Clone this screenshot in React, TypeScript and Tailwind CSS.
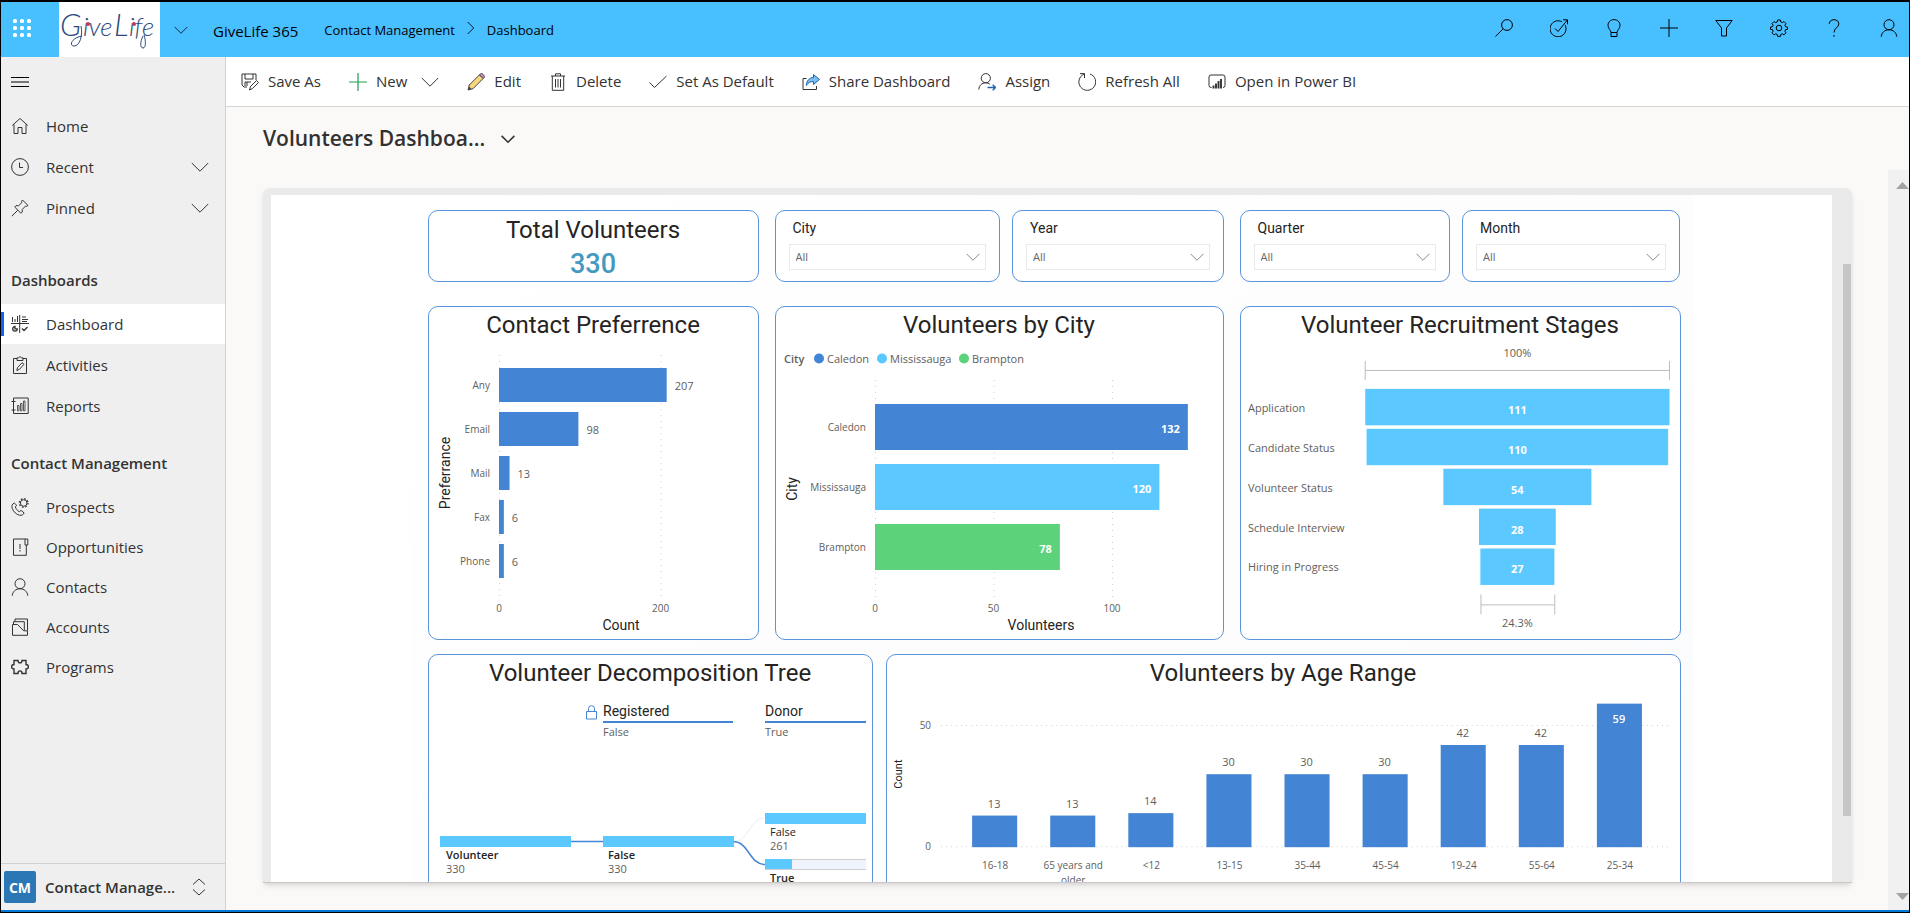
import type { ReactNode } from 'react';

const BLUE = '#4484d4';
const SKY = '#5bc9ff';
const GREEN = '#5cd27a';

// Line icon drawn on an 18x18 grid
function Icon({ children, size = 18, className = '' }: { children: ReactNode; size?: number; className?: string }) {
  return (
    <svg
      width={size}
      height={size}
      viewBox="0 0 18 18"
      fill="none"
      stroke="currentColor"
      strokeWidth="1"
      aria-hidden="true"
      className={`shrink-0 ${className}`}
    >
      {children}
    </svg>
  );
}

const ChevronDown = ({ size = 18, className = '' }: { size?: number; className?: string }) => (
  <Icon size={size} className={className}>
    <path d="M.8 5l8.2 8.2L17.200 5" />
  </Icon>
);

const gearPath =
  'M7.600 1h2.800l.4 2 1.500.6 1.700-1.100 2 2-1.100 1.700.6 1.500 2 .4v2.200l-2 .4-.6 1.500 1.100 1.700-2 2-1.700-1.100-1.500.6-.4 2H7.600l-.4-2-1.500-.6L4 15.900l-2-2 1.100-1.700-.6-1.500-2-.4V8.100l2-.4.6-1.500L2 4.500l2-2 1.700 1.100 1.500-.6z';

const person = (
  <>
    <circle cx="9" cy="5.700" r="5" />
    <path d="M1.200 17.800c.4-4.400 3.600-7 7.800-7s7.400 2.600 7.800 7" />
  </>
);

const topActions = [
  { label: 'Search', icon: <><circle cx="12" cy="6" r="5.400" /><path d="M8 10L.4 17.500" /></> },
  { label: 'Task flow', icon: <><path d="M15 5.800a8 8 0 1 1-3-3" /><path d="M5 9.500l3 3L17.300 1M13 .8h4.500v4.500" /></> },
  { label: 'Insights', icon: <><path d="M6 13.500c0-2.500-3-3.500-3-7.200C3 3 5.600.6 9 .6s6 2.400 6 5.700c0 3.700-3 4.700-3 7.200zM6 13.500v4h6v-4" /></> },
  { label: 'Quick create', icon: <path d="M9 0v18M0 9h18" /> },
  { label: 'Filter', icon: <path d="M.8 1.500h16.400L11.500 9v8h-5V9z" /> },
  { label: 'Settings', icon: <><path d={gearPath} /><circle cx="9" cy="9" r="2.800" /></> },
  { label: 'Help', icon: <path d="M4.200 4.800C4.400 2.200 6.300.7 9 .7s4.800 1.500 4.800 4.200c0 3.600-4.800 4.200-4.800 8.600M9 16v1.800" /> },
  { label: 'Account', icon: person },
];

const commands = [
  {
    label: 'Save As',
    icon: <><path d="M6 14H3L1 12V1h14v6M4 1v5h8V1M4 13V9h6M6 9v4" /><path d="M8.500 17l1-3.500 6-6 2 2-6 6z" /></>,
  },
  { label: 'New', icon: <path d="M9 0v18M0 9h18" stroke="#1fa050" strokeWidth="1.200" />, menu: true },
  {
    label: 'Edit',
    icon: (
      <>
        <path d="M1 17l1.300-5L12.500 1.800l3.700 3.700L6 15.700z" fill="#f8d77e" stroke="#444" />
        <path d="M12.500 1.800l1-1c1.600-1 4.600 2 3.700 3.700l-1 1z" fill="#cf8fd6" stroke="#444" />
        <path d="M1 17l1-3.500L4.500 16z" fill="#444" stroke="none" />
      </>
    ),
  },
  {
    label: 'Delete',
    icon: <><path d="M2 3h14M6.500 3V.8h5V3M3.300 3v14.300h11.400V3" /><path d="M6.500 6v8.500M9 6v8.500M11.500 6v8.500" /></>,
  },
  { label: 'Set As Default', icon: <path d="M.5 9.500l5 5L17.500 3" /> },
  {
    label: 'Share Dashboard',
    icon: (
      <>
        <path d="M4.500 5.500H1v11h13.500V13" />
        <path d="M11.500 1.500l6 5-6 5V8.600C8 8.500 6 9.600 4.300 12.500 4.600 7.500 7.300 4.700 11.500 4.500z" fill="#7dbcf0" stroke="#1d64ae" />
      </>
    ),
  },
  {
    label: 'Assign',
    icon: (
      <>
        <circle cx="7.800" cy="5.200" r="4.600" />
        <path d="M.8 16.500c.4-4 3-6.700 7-6.700 1.700 0 3 .5 4 1.300" />
        <path d="M9.500 14.500h8M14.700 11.700l2.800 2.800-2.800 2.800" stroke="#1d64ae" strokeWidth="1.400" />
      </>
    ),
  },
  { label: 'Refresh All', icon: <><path d="M6 1.200A8.400 8.400 0 1 0 12 1" /><path d="M2 .6h4.500v4.500" /></> },
  {
    label: 'Open in Power BI',
    icon: (
      <>
        <path d="M3.500 14.500H3a2 2 0 0 1-2-2V4a2 2 0 0 1 2-2h12a2 2 0 0 1 2 2v8.500a2 2 0 0 1-2 2" />
        <path d="M5.500 15.500v-3M8 15.500v-5M10.500 15.500V8M13 15.500V6" strokeWidth="1.900" />
      </>
    ),
  },
];

const homeLinks = [
  { label: 'Home', icon: <path d="M1.200 8.500L9 1.500l7.800 7M3 7.500v9h4v-6h4v6h4v-9" /> },
  { label: 'Recent', icon: <><circle cx="9" cy="9" r="8.400" /><path d="M8.500 4.500v5H12" /></>, expandable: true },
  { label: 'Pinned', icon: <path d="M11.500 1l5.500 5.500-1.500.8-1-.2-3.300 3.400.2 2.500-1.400 1.300-6.300-6.300L5 6.600l2.500.2 3.400-3.300-.3-1.200zM6.800 11.200L.8 17.200" />, expandable: true },
];

const dashboardLinks = [
  {
    label: 'Dashboard',
    icon: (
      <>
        <path d="M0 8.500h18M8.700 0v18" />
        <path d="M1.500 2v5M4 4v3M6.500 1v6M11 2h4M11 4.500h6M11 6.500h5" />
        <path d="M4 11.500a2.300 2.300 0 1 0 2.300 2.300H4zM11 13.500l2 2 3.500-3.500" strokeWidth="1.300" />
      </>
    ),
    active: true,
  },
  { label: 'Activities', icon: <><path d="M6 2.500H2.500v15h13v-15H12M6 4.500h6v-2.700h-1.500L9 .6 7.500 1.800H6z" /><path d="M5.800 14.500l.7-2.800 4.500-5 2 1.600-4.500 5z" /></> },
  { label: 'Reports', icon: <><path d="M2.500 1h14.700v15.500H2.500zM.5 4.500h4M.5 13h4" /><path d="M6.500 8.500H8v5.300H6.500zM9.500 6.500H11v7.300H9.500zM12.500 4H14v9.800h-1.500z" strokeWidth=".8" /></> },
];

const contactLinks = [
  {
    label: 'Prospects',
    icon: (
      <>
        <path d="M3.300 5C1 6 .3 8 1.300 10.500c1.500 3.700 4 6 7.200 6.700 2.200.4 4-.5 4.600-2.300l-3-2.500-1.800 1.300c-2-1-3.500-3-4-5l1.500-1.300z" />
        <circle cx="12.700" cy="5" r="3.300" />
        <circle cx="12.700" cy="5" r="4.300" strokeDasharray="1.600 1.780" strokeWidth="1.300" />
      </>
    ),
  },
  { label: 'Opportunities', icon: <><path d="M14 1H2.500v16.300h12.800V7" /><path d="M14 1h2.800v6H14zM9 6v5M9 12v1.500" /></> },
  { label: 'Contacts', icon: person },
  { label: 'Accounts', icon: <><path d="M1.500 6.500v10.800h15v-4.500h-3.800L6.500 6.500zM2.500 6.500V3.700h10.800v8.500" /><path d="M4 3.500V1h12.500v11.500" /></> },
  {
    label: 'Programs',
    icon: (
      <path
        d="M3 2.500h4c0 1 .3 2.400 2 2.400s2-1.400 2-2.400h4v4c1.500 0 2.400.5 2.400 2.200s-.9 2.300-2.400 2.300v4.500h-4c0-1.500-.5-2.600-2-2.600s-2 1.100-2 2.600H3V11C1.500 11 .6 10.400.6 8.700S1.500 6.500 3 6.500z"
        strokeWidth="1.400"
      />
    ),
  },
];

type NavLink = { label: string; icon: ReactNode; expandable?: boolean; active?: boolean };

function NavItem({ link }: { link: NavLink }) {
  return (
    <a href="#" className={`flex h-10 items-center pr-4 text-[15px] text-[#333] ${link.active ? 'bg-white' : ''}`}>
      <span className={`h-6 w-[3px] ${link.active ? 'bg-[#0f62fe]' : ''}`} />
      <Icon className="ml-[7px]">{link.icon}</Icon>
      <span className="ml-[17px] flex-1">{link.label}</span>
      {link.expandable && <ChevronDown />}
    </a>
  );
}

function TopBar() {
  return (
    <header className="flex h-[55px] shrink-0 items-center bg-[#48bfff] text-black">
      <button type="button" aria-label="App launcher" className="mb-[3px] flex w-[58px] pl-3">
        <svg width="18" height="18" viewBox="0 0 18 18" fill="#fff" aria-hidden="true">
          {[2, 9, 16].map((y) => [2, 9, 16].map((x) => <rect key={`${x}-${y}`} x={x - 2} y={y - 2} width="4" height="4" rx="1.500" />))}
        </svg>
      </button>
      <a href="#" aria-label="GiveLife" className="flex h-full w-[101px] items-center justify-center bg-white">
        <svg width="101" height="55" viewBox="0 0 101 55" fill="#2c4a7c" className="font-['Lato',sans-serif] font-light italic">
          <text x="1" y="34" fontSize="31">G</text>
          <text x="24" y="34" fontSize="26">ive</text>
          <text x="55" y="34" fontSize="31">L</text>
          <text x="70" y="34" fontSize="26">ife</text>
          {/* Swashes under the G and the f */}
          <path d="M22 24c2 9-1 20-7 20-5 0-3-8 8-10M85 33c2 6 2 13-1 13s-3-6 0-12" fill="none" stroke="#2c4a7c" />
          <circle cx="29" cy="22" r="2" fill="#c23a4c" />
          <circle cx="75" cy="22" r="2" fill="#c23a4c" />
        </svg>
      </a>
      <button type="button" aria-label="Switch app" className="ml-[14px]">
        <ChevronDown size={14} />
      </button>
      <nav aria-label="Breadcrumb" className="flex items-center pt-[3px] text-[13px]">
        <a href="#" className="mr-[26px] ml-[25px] text-[15px]">GiveLife 365</a>
        <a href="#">Contact Management</a>
        <Icon size={12} className="mx-[10px] mb-[6px]"><path d="M4 0l9 9-9 9" strokeWidth="1.300" /></Icon>
        <a href="#">Dashboard</a>
      </nav>
      <div className="mr-[11px] mb-[3px] ml-auto flex gap-[37px]">
        {topActions.map((action) => (
          <button key={action.label} type="button" aria-label={action.label}>
            <Icon>{action.icon}</Icon>
          </button>
        ))}
      </div>
    </header>
  );
}

function Sidebar() {
  return (
    <aside className="flex w-[225px] shrink-0 flex-col border-r border-[#d2d2d2] bg-[#efefef]">
      <button type="button" aria-label="Toggle navigation" className="flex h-[49px] items-center pl-[10px] text-black">
        <Icon><path d="M0 4.500h18M0 9h18M0 13.500h18" /></Icon>
      </button>
      <nav className="flex flex-1 flex-col">
        <div className="flex flex-col gap-px">
          {homeLinks.map((link) => <NavItem key={link.label} link={link} />)}
        </div>
        <h2 className="mt-[28px] flex h-12 items-center pl-[10px] text-[15px] font-semibold text-[#333]">Dashboards</h2>
        <div className="flex flex-col gap-px">
          {dashboardLinks.map((link) => <NavItem key={link.label} link={link} />)}
        </div>
        <h2 className="mt-[13px] flex h-12 items-center pl-[10px] text-[15px] font-semibold text-[#333]">Contact Management</h2>
        <div className="flex flex-col">
          {contactLinks.map((link) => <NavItem key={link.label} link={link} />)}
        </div>
      </nav>
      <button type="button" className="flex h-[47px] items-center border-t border-[#d2d2d2] pl-[3px] text-[15px] font-semibold text-[#333]">
        <span className="flex size-8 items-center justify-center rounded-xs bg-[#2b76b5] text-[14px] font-bold text-white">CM</span>
        <span className="ml-[9px] w-[134px] text-left whitespace-nowrap">Contact Manage...</span>
        <Icon className="ml-[11px]"><path d="M3 6.500L9 1l6 5.500M3 11.500L9 17l6-5.500" /></Icon>
      </button>
    </aside>
  );
}

function CommandBar() {
  return (
    <div className="flex h-[50px] shrink-0 items-center gap-7 border-b border-[#d6d6d6] bg-white pl-[15px] text-[15px] text-[#333]">
      {commands.map((command) => (
        <button key={command.label} type="button" className="flex items-center gap-[9px] whitespace-nowrap">
          <Icon>{command.icon}</Icon>
          {command.label}
          {command.menu && <ChevronDown className="ml-[5px]" />}
        </button>
      ))}
    </div>
  );
}

function Card({ title, children }: { title: string; children: ReactNode }) {
  return (
    <section className="rounded-[10px] border border-[#5b93dc] bg-white">
      <h2 className="text-center font-['Roboto',sans-serif] text-[24px] leading-9 text-[#252423]">{title}</h2>
      {children}
    </section>
  );
}

function Slicer({ label }: { label: string }) {
  return (
    <label className="flex flex-col rounded-[10px] border border-[#5b93dc] bg-white px-[13px] pt-[7px] font-['Roboto',sans-serif] text-[14px] leading-5 text-[#252423]">
      <span className="pl-1">{label}</span>
      <span className="relative mt-[6px] block">
        <select className="block h-[26px] w-full appearance-none border border-[#eaeaea] bg-white pl-[6px] font-['Open_Sans',sans-serif] text-[11px] text-[#666]">
          <option>All</option>
        </select>
        <ChevronDown size={14} className="pointer-events-none absolute top-[6px] right-[6px] text-[#666]" />
      </span>
    </label>
  );
}

const preferences = [
  { label: 'Any', value: 207 },
  { label: 'Email', value: 98 },
  { label: 'Mail', value: 13 },
  { label: 'Fax', value: 6 },
  { label: 'Phone', value: 6 },
];

function PreferenceChart() {
  return (
    <svg viewBox="0 0 329 296" className="block w-full font-['Open_Sans',sans-serif]" fill="#605e5c" fontSize="11">
      {[0, 200].map((tick) => (
        <g key={tick}>
          <path d={`M${70.500 + tick * 0.808} 12v243`} stroke="#d0d0d0" strokeDasharray="1 5" />
          <text x={70 + tick * 0.808} y="269" fontSize="10" textAnchor="middle">{tick}</text>
        </g>
      ))}
      {preferences.map((row, i) => (
        <g key={row.label}>
          <text x="61" y={46 + i * 44} fontSize="10" textAnchor="end">{row.label}</text>
          <rect x="70" y={25 + i * 44} width={row.value * 0.81} height="34" fill={BLUE} />
          <text x={78 + row.value * 0.81} y={47 + i * 44}>{row.value}</text>
        </g>
      ))}
      <g className="font-['Roboto',sans-serif]" fill="#252423" fontSize="14" textAnchor="middle">
        <text x="192" y="287">Count</text>
        <text transform="translate(21 130) rotate(-90)">Preferrance</text>
      </g>
    </svg>
  );
}

const cities = [
  { label: 'Caledon', value: 132, color: BLUE, legendX: 43 },
  { label: 'Mississauga', value: 120, color: SKY, legendX: 106 },
  { label: 'Brampton', value: 78, color: GREEN, legendX: 188 },
];

function CityChart() {
  return (
    <svg viewBox="0 0 447 296" className="block w-full font-['Open_Sans',sans-serif]" fill="#605e5c" fontSize="11">
      <text x="8" y="20" fontWeight="600">City</text>
      {[0, 50, 100].map((tick) => (
        <g key={tick}>
          <path d={`M${99.500 + tick * 2.37} 37v218`} stroke="#d0d0d0" strokeDasharray="1 5" />
          <text x={99 + tick * 2.37} y="269" fontSize="10" textAnchor="middle">{tick}</text>
        </g>
      ))}
      {cities.map((city, i) => (
        <g key={city.label}>
          <circle cx={city.legendX} cy="15.500" r="5" fill={city.color} />
          <text x={city.legendX + 8} y="20">{city.label}</text>
          <text x="90" y={88 + i * 60} fontSize="10" textAnchor="end">{city.label}</text>
          <rect x="99" y={61 + i * 60} width={city.value * 2.37} height="46" fill={city.color} />
          <text x={91 + city.value * 2.37} y={90 + i * 60} fill="#fff" fontWeight="700" textAnchor="end">{city.value}</text>
        </g>
      ))}
      <g className="font-['Roboto',sans-serif]" fill="#252423" fontSize="14" textAnchor="middle">
        <text x="265" y="287">Volunteers</text>
        <text transform="translate(21 146) rotate(-90)">City</text>
      </g>
    </svg>
  );
}

const stages = [
  { label: 'Application', value: 111 },
  { label: 'Candidate Status', value: 110 },
  { label: 'Volunteer Status', value: 54 },
  { label: 'Schedule Interview', value: 28 },
  { label: 'Hiring in Progress', value: 27 },
];

function StagesChart() {
  return (
    <svg viewBox="0 0 440 296" className="block w-full font-['Open_Sans',sans-serif]" fill="#605e5c" fontSize="11">
      <text x="277" y="14" textAnchor="middle">100%</text>
      <path d="M124.500 18v19M124.500 27.500h305M429.500 18v19M240.500 252v20M240.500 262.500h74M314.500 252v20" stroke="#bdbdbd" fill="none" />
      {stages.map((stage, i) => (
        <g key={stage.label}>
          <text x="7" y={69 + i * 40}>{stage.label}</text>
          <rect x={277 - stage.value * 1.374} y={46 + i * 40} width={stage.value * 2.748} height="36.500" fill={SKY} />
          <text x="277" y={71 + i * 40} fill="#fff" fontWeight="700" textAnchor="middle">{stage.value}</text>
        </g>
      ))}
      <text x="277" y="285" textAnchor="middle">24.3%</text>
    </svg>
  );
}

function DecompositionTree() {
  return (
    <svg viewBox="0 0 443 191" className="block w-full font-['Open_Sans',sans-serif]" fill="#605e5c" fontSize="11">
      <path d="M157.500 20.500h10v7.500h-10zM159.500 20.500v-2.800a3 3 0 0 1 6 0v2.800" fill="none" stroke={BLUE} />
      <g className="font-['Roboto',sans-serif]" fill="#252423" fontSize="14">
        <text x="174" y="25">Registered</text>
        <text x="336" y="25">Donor</text>
      </g>
      <path d="M174 31h130M336 31h101" stroke={BLUE} strokeWidth="2" />
      <text x="174" y="45">False</text>
      <text x="336" y="45">True</text>

      <path d="M304 151c16 0 16-24 32-24" fill="none" stroke="#e8eefa" />
      <path d="M142 150.500h32M304 150.500c16 0 16 23 32 23" fill="none" stroke={BLUE} strokeWidth="1.500" />
      <rect x="11" y="145" width="131" height="11" fill={SKY} />
      <rect x="174" y="145" width="131" height="11" fill={SKY} />
      <rect x="336" y="122" width="101" height="11" fill={SKY} />
      <rect x="336" y="168" width="101" height="10" fill="#eef3fc" />
      <path d="M336 168.500h101M336 178.500h101" stroke="#cfcfcf" />
      <rect x="336" y="168" width="27" height="10" fill={SKY} />

      <g fill="#252423" fontWeight="600">
        <text x="17" y="168">Volunteer</text>
        <text x="179" y="168">False</text>
        <text x="341" y="191">True</text>
        <text x="341" y="145" fontWeight="400">False</text>
      </g>
      <text x="17" y="182">330</text>
      <text x="179" y="182">330</text>
      <text x="341" y="159">261</text>
    </svg>
  );
}

const ages = [
  { lines: ['16-18'], value: 13 },
  { lines: ['65 years and', 'older'], value: 13 },
  { lines: ['<12'], value: 14 },
  { lines: ['13-15'], value: 30 },
  { lines: ['35-44'], value: 30 },
  { lines: ['45-54'], value: 30 },
  { lines: ['19-24'], value: 42 },
  { lines: ['55-64'], value: 42 },
  { lines: ['25-34'], value: 59 },
];

function AgeChart() {
  return (
    <svg viewBox="0 0 792 296" className="block w-full font-['Open_Sans',sans-serif]" fill="#605e5c" fontSize="10" textAnchor="middle">
      <path d="M54 34.500h730M54 155.500h730" stroke="#d0d0d0" strokeDasharray="1 4" />
      <text x="44" y="38" textAnchor="end">50</text>
      <text x="44" y="159" textAnchor="end">0</text>
      {ages.map((age, i) => {
        const x = 107 + i * 78;
        const top = 156 - age.value * 2.43;
        const inside = age.value > 50;
        return (
          <g key={age.lines[0]}>
            <rect x={x - 22} y={top} width="45" height={age.value * 2.43} fill={BLUE} />
            <text x={x} y={inside ? top + 19 : top - 8} fontSize="11" fill={inside ? '#fff' : undefined} fontWeight={inside ? 600 : 400}>
              {age.value}
            </text>
            {age.lines.map((line, n) => (
              <text key={line} x={x + 1} y={178 + n * 15}>{line}</text>
            ))}
          </g>
        );
      })}
      <text transform="translate(15 83) rotate(-90)" className="font-['Roboto',sans-serif]" fontSize="11" fill="#252423">Count</text>
    </svg>
  );
}

function Report() {
  return (
    <div className="flex flex-1 overflow-hidden rounded-t-md border-b border-[#c8c8c8] bg-[#eaeaea] pt-[7px] pl-2 shadow-md">
      <div className="flex-1 overflow-hidden bg-white">
        <div className="mx-auto flex max-w-[1282px] flex-col bg-linear-to-br from-white via-[#fdfdfe] to-[#fafbfc] pt-[15px] pr-3 pb-4 pl-[17px]">
          <div className="grid grid-cols-[331fr_449fr_441fr] gap-x-4">
            <section className="flex h-[72px] flex-col items-center rounded-[10px] border border-[#5b93dc] bg-white pt-px font-['Roboto',sans-serif]">
              <h2 className="text-[24px] leading-9 text-[#252423]">Total Volunteers</h2>
              <p className="text-[27px] leading-8 font-medium text-[#4499c0]">330</p>
            </section>
            <div className="grid grid-cols-[225fr_211fr] gap-3">
              <Slicer label="City" />
              <Slicer label="Year" />
            </div>
            <div className="grid grid-cols-[211fr_219fr] gap-3">
              <Slicer label="Quarter" />
              <Slicer label="Month" />
            </div>
          </div>
          <div className="mt-6 grid grid-cols-[331fr_449fr_441fr] gap-x-4">
            <Card title="Contact Preferrence"><PreferenceChart /></Card>
            <Card title="Volunteers by City"><CityChart /></Card>
            <Card title="Volunteer Recruitment Stages"><StagesChart /></Card>
          </div>
          <div className="mt-[14px] grid grid-cols-[445fr_795fr] gap-x-[13px]">
            <Card title="Volunteer Decomposition Tree"><DecompositionTree /></Card>
            <Card title="Volunteers by Age Range"><AgeChart /></Card>
          </div>
        </div>
      </div>
      <div className="w-5 pt-[69px] pl-[11px]">
        <div className="h-[552px] w-2 bg-[#c6c6c6]" />
      </div>
    </div>
  );
}

export default function App() {
  return (
    <div className="flex h-screen flex-col overflow-hidden border border-t-2 border-black bg-[#faf9f8] font-['Open_Sans','Noto_Sans',sans-serif]">
      <TopBar />
      <div className="flex min-h-0 flex-1 border-b-2 border-[#0078d4]">
        <Sidebar />
        <main className="flex min-w-0 flex-1 flex-col">
          <CommandBar />
          <div className="flex min-h-0 flex-1">
            <div className="flex min-w-0 flex-1 flex-col pr-9 pb-[27px] pl-[37px]">
              <button type="button" className="flex h-[81px] items-start gap-4 pt-[15px] text-[21px] leading-8 font-semibold text-[#323130]">
                Volunteers Dashboa...
                <ChevronDown size={14} className="mt-[10px] stroke-2" />
              </button>
              <Report />
            </div>
            {/* Page scrollbar */}
            <div className="mt-[63px] flex w-[21px] flex-col items-end justify-between bg-[#f1f1f1] pt-3 pb-[10px]">
              <svg width="13" height="7" viewBox="0 0 13 7" fill="#a3a3a3" aria-hidden="true"><path d="M0 7l6.500-7L13 7z" /></svg>
              <svg width="13" height="7" viewBox="0 0 13 7" fill="#a3a3a3" aria-hidden="true"><path d="M0 0l6.500 7L13 0z" /></svg>
            </div>
          </div>
        </main>
      </div>
    </div>
  );
}
